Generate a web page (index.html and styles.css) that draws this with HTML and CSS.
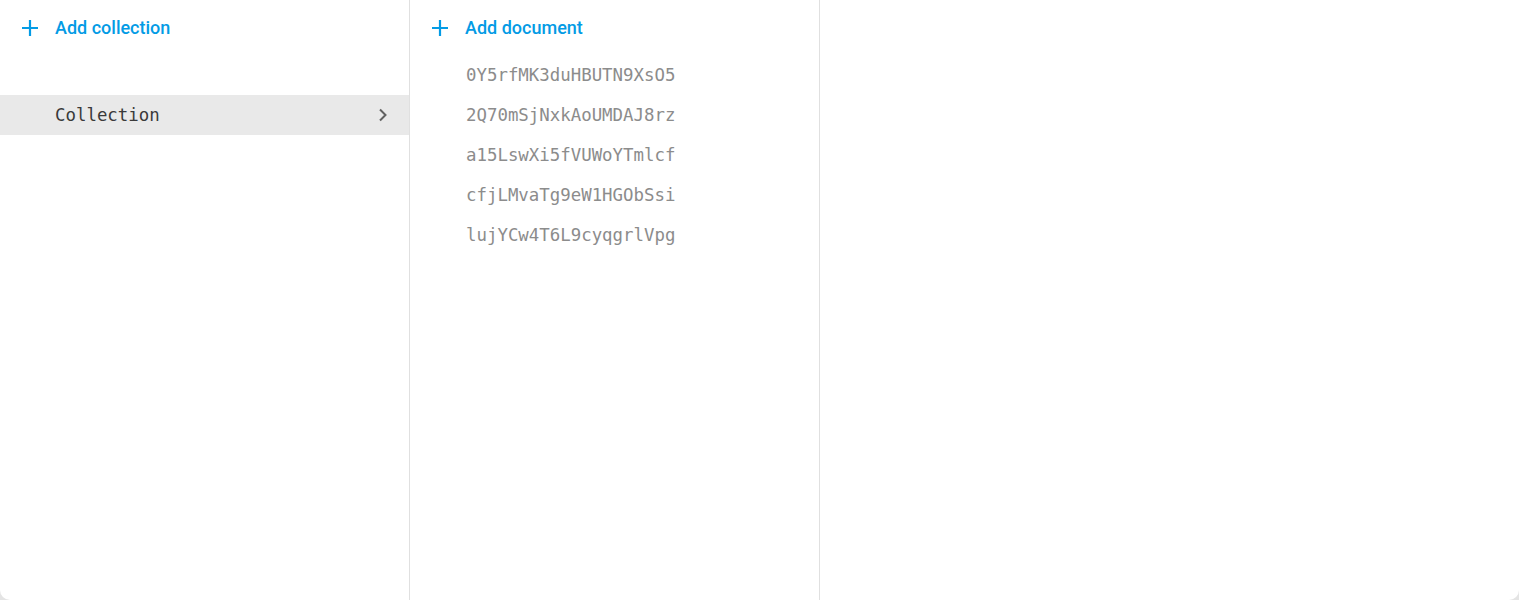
FILE: index.html
```html
<!DOCTYPE html>
<html>
<head>
<meta charset="utf-8">
<link rel="stylesheet" href="styles.css">
</head>
<body>
<div class="card">
  <div class="col">
    <div class="add">
      <svg class="plus" width="18" height="18" viewBox="0 0 18 18"><path d="M9 1v16M1 9h16" stroke="#039be5" stroke-width="2.2" fill="none"/></svg>
      <span>Add collection</span>
    </div>
    <div class="spacer"></div>
    <div class="row selected">
      <span class="mono dark">Collection</span>
      <svg class="chev" width="10" height="14" viewBox="0 0 10 14"><path d="M2 1.5l5.5 5.5L2 12.5" stroke="#616161" stroke-width="2" fill="none"/></svg>
    </div>
  </div>
  <div class="col">
    <div class="add">
      <svg class="plus" width="18" height="18" viewBox="0 0 18 18"><path d="M9 1v16M1 9h16" stroke="#039be5" stroke-width="2.2" fill="none"/></svg>
      <span>Add document</span>
    </div>
    <div class="docs">
      <div class="row"><span class="mono">0Y5rfMK3duHBUTN9XsO5</span></div>
      <div class="row"><span class="mono">2Q70mSjNxkAoUMDAJ8rz</span></div>
      <div class="row"><span class="mono">a15LswXi5fVUWoYTmlcf</span></div>
      <div class="row"><span class="mono">cfjLMvaTg9eW1HGObSsi</span></div>
      <div class="row"><span class="mono">lujYCw4T6L9cyqgrlVpg</span></div>
    </div>
  </div>
  <div class="col last"></div>
</div>
</body>
</html>
```
FILE: styles.css
```css
html, body {
  margin: 0;
  padding: 0;
  background: #e4e4e4;
}
body {
  font-family: Roboto, "Noto Sans", sans-serif;
}
.card {
  display: flex;
  width: 1519px;
  height: 600px;
  background: #fff;
  border-radius: 0 0 10px 10px;
  overflow: hidden;
}
.col {
  width: 409px;
  flex: none;
  border-right: 1px solid #e0e0e0;
  display: flex;
  flex-direction: column;
}
.col.last {
  flex: 1;
  border-right: none;
}
.add {
  height: 55px;
  padding-bottom: 1px;
  display: flex;
  align-items: center;
  padding-left: 21px;
  color: #039be5;
  font-size: 18px;
  font-weight: 500;
}
.add .plus {
  margin-right: 16px;
  flex: none;
  margin-top: 1px;
}
.spacer {
  height: 39px;
}
.docs {
  margin-top: -1px;
}
.row {
  height: 40px;
  display: flex;
  align-items: center;
  padding-left: 55px;
  padding-right: 20px;
}
.col + .col .row {
  padding-left: 56px;
}
.row.selected {
  background: #e9e9e9;
  justify-content: space-between;
}
.mono {
  font-family: "DejaVu Sans Mono", "Liberation Mono", monospace;
  font-size: 17.4px;
  font-weight: 300;
  color: #8c8c8c;
}
.mono.dark {
  color: #3a3a3a;
}
.chev {
  margin-right: 1px;
}
```
